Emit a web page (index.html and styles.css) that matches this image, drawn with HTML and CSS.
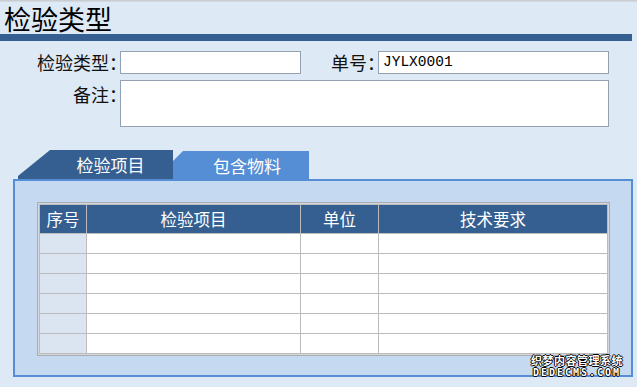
FILE: index.html
```html
<!DOCTYPE html>
<html lang="zh-CN">
<head>
<meta charset="utf-8">
<title>检验类型</title>
<link rel="stylesheet" href="styles.css">
</head>
<body>
<div class="topline"></div>
<header class="title-bar"><h1 class="title">检验类型</h1></header>

<div class="form">
  <label class="lbl">检验类型：</label>
  <div class="input w-type"></div>
  <label class="lbl lbl-no">单号：</label>
  <div class="input w-no">JYLX0001</div>
  <label class="lbl lbl-top">备注：</label>
  <div class="input area"></div>
</div>

<div class="tabs">
  <div class="tab tab-active">检验项目</div>
  <div class="tab tab-other">包含物料</div>
</div>

<div class="panel">
  <div class="grid-wrap">
    <div class="grid">
      <div class="th">序号</div><div class="th">检验项目</div><div class="th">单位</div><div class="th">技术要求</div>
      <div class="td idx"></div><div class="td"></div><div class="td"></div><div class="td"></div>
      <div class="td idx"></div><div class="td"></div><div class="td"></div><div class="td"></div>
      <div class="td idx"></div><div class="td"></div><div class="td"></div><div class="td"></div>
      <div class="td idx"></div><div class="td"></div><div class="td"></div><div class="td"></div>
      <div class="td idx"></div><div class="td"></div><div class="td"></div><div class="td"></div>
      <div class="td idx"></div><div class="td"></div><div class="td"></div><div class="td"></div>
    </div>
  </div>
</div>

<div class="watermark"><span class="wm1">织梦内容管理系统</span><span class="wm2">DEDECMS.COM</span></div>
</body>
</html>
```

FILE: styles.css
```css
html, body {
  margin: 0;
  padding: 0;
}
body {
  width: 637px;
  height: 387px;
  overflow: hidden;
  background: #dde9f5;
  font-family: "Noto Sans CJK SC", "Noto Sans", sans-serif;
  color: #000;
  position: relative;
}
.topline {
  height: 2px;
  background: linear-gradient(#c4c8cc, #d6dde6);
}
.title-bar {
  width: 632px;
  border-bottom: 7px solid #365f91;
}
.title {
  margin: 0;
  padding: 2px 0 0 4px;
  font-size: 27px;
  font-weight: normal;
  line-height: 30px;
}
.form {
  margin-top: 10px;
  display: grid;
  grid-template-columns: 115px 181px 67px 231px;
  column-gap: 5px;
  row-gap: 6px;
}
.lbl {
  font-size: 18px;
  line-height: 23px;
  text-align: right;
  white-space: nowrap;
  margin-right: -12px;
  color: #111;
}
.lbl-top {
  padding-top: 3px;
}
.input {
  box-sizing: border-box;
  height: 23px;
  background: #fff;
  border: 1px solid #93a1b0;
  font-family: "Liberation Mono", monospace;
  font-size: 14.5px;
  line-height: 21px;
  padding-left: 4px;
}
.area {
  grid-column: 2 / 5;
  height: 47px;
}
.tabs {
  margin-top: 23px;
  display: flex;
  align-items: flex-end;
  height: 29px;
  padding-left: 18px;
}
.tab {
  color: #fff;
  font-size: 17px;
  box-sizing: border-box;
  display: flex;
  align-items: center;
  justify-content: center;
}
.tab-active {
  position: relative;
  z-index: 1;
  width: 155px;
  height: 29px;
  padding-left: 30px;
  background: #365f91;
  clip-path: polygon(0 26px, 32px 0, 100% 0, 100% 100%, 0 100%);
}
.tab-other {
  margin-left: -18px;
  width: 154px;
  height: 28px;
  padding-left: 30px;
  background: #558ed5;
  clip-path: polygon(0 100%, 28px 0, 100% 0, 100% 100%);
}
.panel {
  margin-left: 13px;
  width: 620px;
  height: 198px;
  box-sizing: border-box;
  border: 2px solid #558ed5;
  background: #c5d9f0;
  padding: 21px 0 0 22px;
}
.grid-wrap {
  width: 573px;
  box-sizing: border-box;
  border: 1px solid #a9adb2;
  padding: 1px;
  background: #d4d8dc;
}
.grid {
  display: grid;
  grid-template-columns: 46px 213px 77px 228px;
  grid-template-rows: 28px repeat(6, 19px);
  gap: 1px;
  border: 1px solid #bcbcbc;
  background: #bcbcbc;
}
.th {
  background: #365f91;
  color: #fff;
  font-size: 16.5px;
  display: flex;
  align-items: center;
  justify-content: center;
}
.td {
  background: #fff;
}
.td.idx {
  background: #dbe5f1;
}
.watermark {
  position: absolute;
  left: 528px;
  top: 354px;
  width: 98px;
  display: flex;
  flex-direction: column;
  align-items: center;
  color: #fff;
  font-weight: bold;
  text-shadow: -1px 0 #000, 1px 0 #000, 0 -1px #000, 0 1px #000;
}
.wm1 {
  font-size: 11px;
  line-height: 12px;
  height: 12px;
  letter-spacing: 0.5px;
}
.wm2 {
  font-family: "DejaVu Sans Mono", monospace;
  font-size: 10px;
  line-height: 11px;
  height: 11px;
  margin-top: 1px;
  letter-spacing: 2px;
}
```
